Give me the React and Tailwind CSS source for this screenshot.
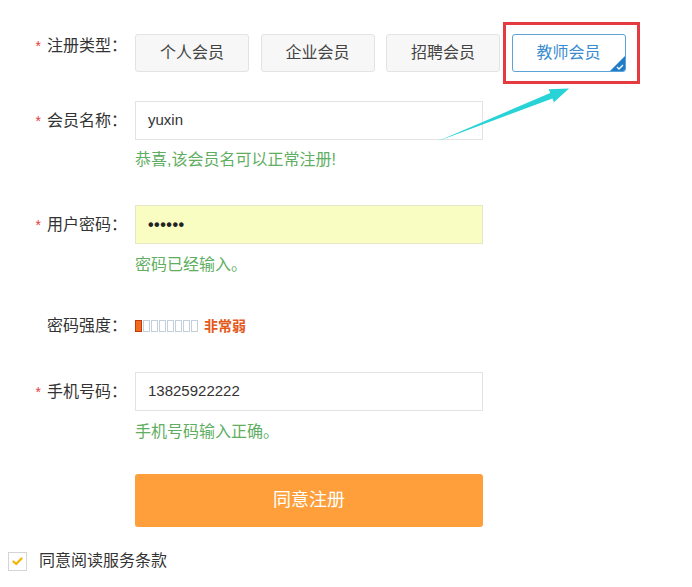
import React from "react";

const FONT = { fontFamily: '"Liberation Sans", Arial, "Noto Sans CJK SC", sans-serif' };

function Label({ children, star = true }) {
  return (
    <div className="w-[135px] shrink-0 flex justify-end pr-[8px] items-center text-[16px] leading-6 text-[#333]">
      {star && <span className="text-[#e4393c] mr-[6px] text-[14px]">*</span>}
      <span>{children}</span>
    </div>
  );
}

function TypeButton({ children }) {
  return (
    <div className="w-[114px] h-[38px] flex items-center justify-center rounded-[3px] border border-[#e3e3e3] bg-[#f7f7f7] text-[16px] text-[#444]">
      {children}
    </div>
  );
}

function Msg({ children, className = "" }) {
  return (
    <div className={"pl-[135px] text-[16px] leading-6 text-[#5fae62] " + className}>{children}</div>
  );
}

export default function App() {
  return (
    <div className="relative w-[692px] h-[587px] bg-white overflow-hidden" style={FONT}>
      <div className="flex flex-col pt-[34px]">
        {/* type row */}
        <div className="flex items-start">
          <Label>注册类型：</Label>
          <div className="flex gap-[11.5px]">
            <TypeButton>个人会员</TypeButton>
            <TypeButton>企业会员</TypeButton>
            <TypeButton>招聘会员</TypeButton>
            <div className="relative w-[114px] h-[38px] flex items-center justify-center rounded-[3px] border border-[#5aa2d8] bg-white text-[16px] text-[#3a8bd0] overflow-hidden">
              教师会员
              <div className="absolute right-0 bottom-0 w-0 h-0 border-l-[15px] border-l-transparent border-b-[15px] border-b-[#1f7dc8]" />
              <svg className="absolute right-[1px] bottom-[1px]" width="8" height="6" viewBox="0 0 8 6">
                <path d="M1 3 L3 5 L7 1" stroke="white" strokeWidth="1.3" fill="none" />
              </svg>
            </div>
          </div>
        </div>

        {/* name */}
        <div className="flex items-center mt-[29px]">
          <Label>会员名称：</Label>
          <div className="w-[348px] h-[39px] border border-[#e3e3e3] bg-white flex items-center pl-[12px] text-[15px] text-[#333]">
            yuxin
          </div>
        </div>
        <Msg className="mt-[8px]">恭喜,该会员名可以正常注册!</Msg>

        {/* password */}
        <div className="flex items-center mt-[33px]">
          <Label>用户密码：</Label>
          <div className="w-[348px] h-[39px] border border-[#e5e8c8] bg-[#f9fdc2] flex items-center pl-[12px] text-[16px] font-bold tracking-[0.5px] text-[#222]">
            ••••••
          </div>
        </div>
        <Msg className="mt-[9px]">密码已经输入。</Msg>

        {/* strength */}
        <div className="flex items-center mt-[37px]">
          <Label star={false}>密码强度：</Label>
          <div className="flex items-center gap-[1px]">
            <div className="w-[7px] h-[12px] border-[1.5px] border-[#c23b0c] bg-[#f26a1b]" />
            {[0, 1, 2, 3, 4, 5, 6].map((i) => (
              <div key={i} className="w-[7px] h-[12px] border-[1.5px] border-[#c4cfdc] bg-white" />
            ))}
          </div>
          <span className="ml-[6px] text-[14px] font-bold text-[#e5581b] leading-6">非常弱</span>
        </div>

        {/* phone */}
        <div className="flex items-center mt-[34px]">
          <Label>手机号码：</Label>
          <div className="w-[348px] h-[39px] border border-[#e3e3e3] bg-white flex items-center pl-[12px] text-[15px] text-[#333]">
            13825922222
          </div>
        </div>
        <Msg className="mt-[9px]">手机号码输入正确。</Msg>

        {/* submit */}
        <div className="flex mt-[30px] pl-[135px]">
          <div className="w-[348px] h-[53px] rounded-[3px] bg-[#fe9f3b] flex items-center justify-center text-[18px] text-white">
            同意注册
          </div>
        </div>

        {/* agree */}
        <div className="flex items-center mt-[22px] pl-[8px]">
          <div className="w-[19px] h-[19px] border border-[#d5d5d5] bg-white flex items-center justify-center">
            <svg width="11" height="9" viewBox="0 0 11 9">
              <path d="M1.5 4.5 L4.2 7 L9.5 1.5" stroke="#f5b400" strokeWidth="2.2" fill="none" strokeLinecap="round" strokeLinejoin="round" />
            </svg>
          </div>
          <span className="ml-[12px] text-[16px] text-[#333]">同意阅读服务条款</span>
        </div>
      </div>

      {/* annotation: red box */}
      <div className="absolute left-[503px] top-[22px] w-[137px] h-[62px] border-[3px] border-[#e53a40]" />

      {/* annotation: arrow */}
      <svg className="absolute left-0 top-0" width="692" height="587" viewBox="0 0 692 587">
        <polygon
          points="437,141.5 550.2,93 548.7,89.3 569,88.5 553.9,102.3 552.4,98.6"
          fill="#27d3d6"
        />
      </svg>
    </div>
  );
}
